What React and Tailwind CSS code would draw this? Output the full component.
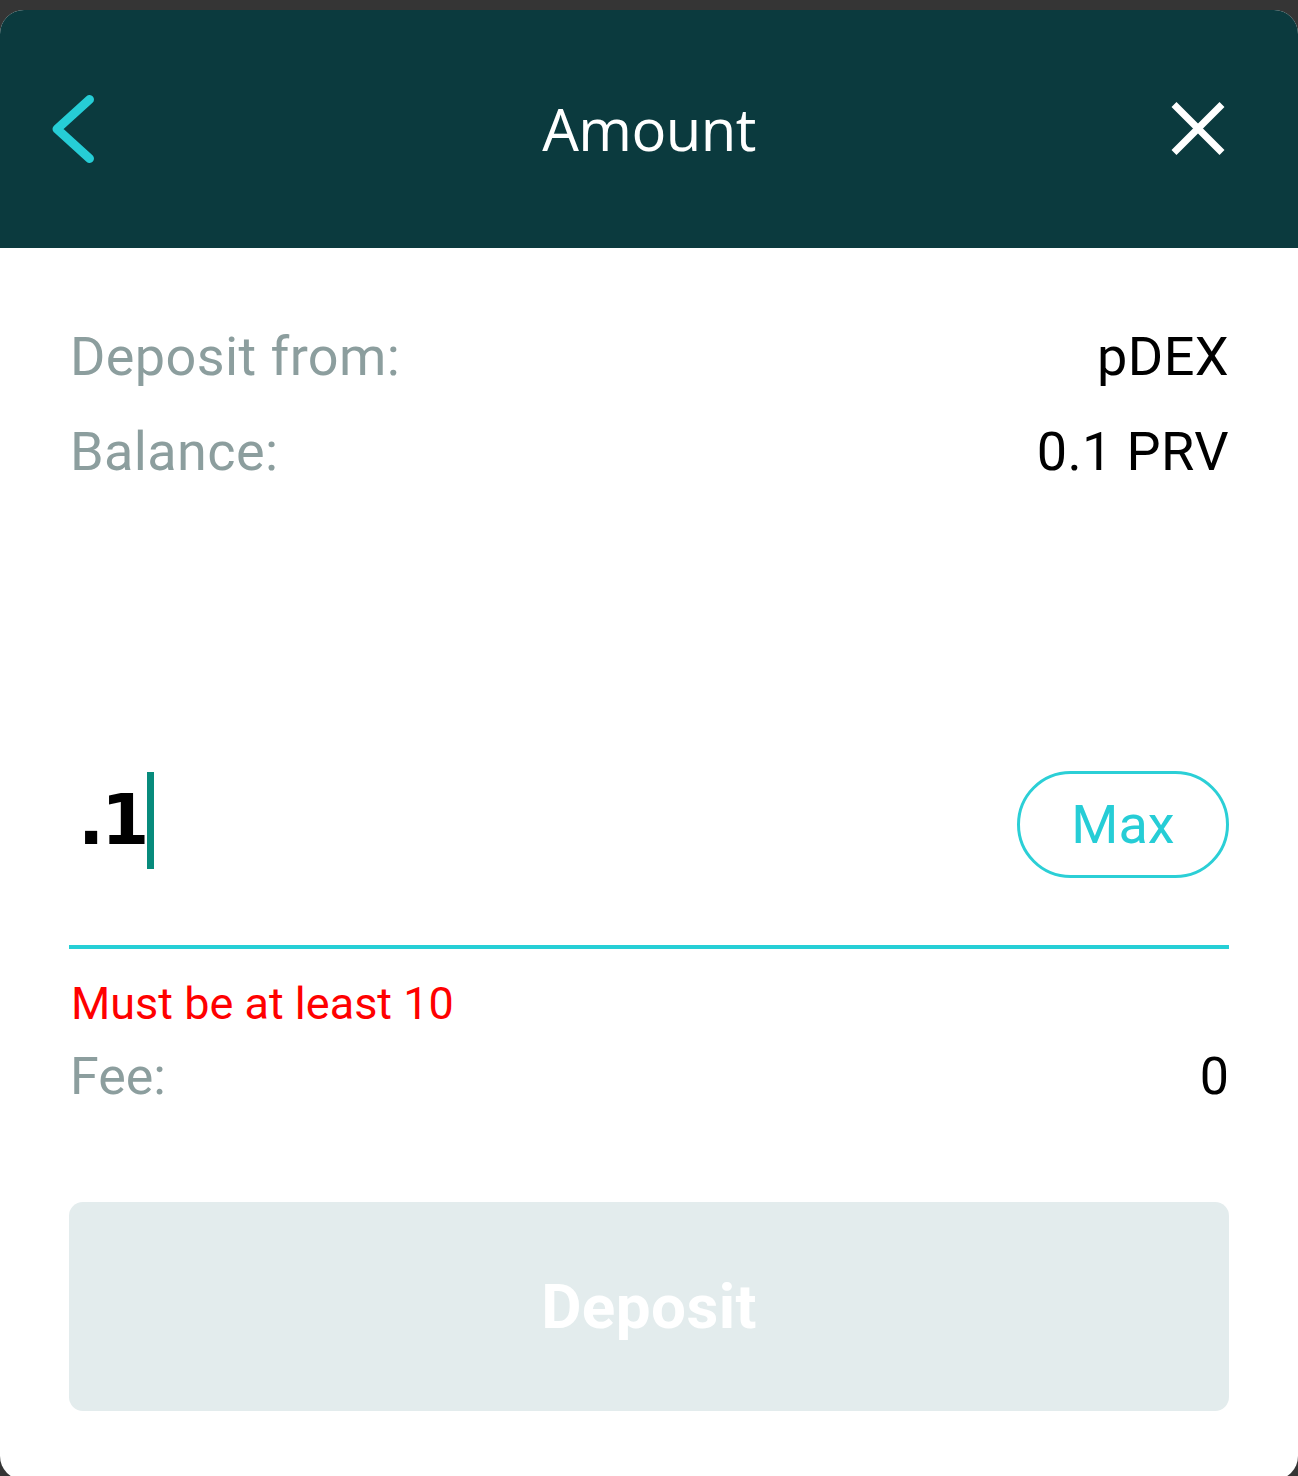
import React from "react";

const rows = [
  { label: "Deposit from:", value: "pDEX" },
  { label: "Balance:", value: "0.1 PRV" },
];

function BackIcon() {
  return (
    <svg width="48" height="76" viewBox="0 0 48 76" fill="none">
      <path
        d="M41.5 8.5 L9 38 L41.5 67.5"
        stroke="#26cdd6"
        strokeWidth="9"
        strokeLinecap="round"
        strokeLinejoin="round"
      />
    </svg>
  );
}

function CloseIcon() {
  return (
    <svg width="64" height="64" viewBox="0 0 64 64" fill="none">
      <path d="M8 7.5 L56 55.5 M56 7.5 L8 55.5" stroke="#ffffff" strokeWidth="7" />
    </svg>
  );
}

export default function App() {
  return (
    <div className="h-[1476px] overflow-hidden bg-[#353535] pt-[10px] font-['Roboto',sans-serif]">
      <div className="flex h-[1470px] flex-col overflow-hidden rounded-[24px] bg-white">
        <header className="grid h-[238px] grid-cols-[1fr_auto_1fr] items-center bg-[#0b3a3e] px-[48px]">
          <div className="flex">
            <BackIcon />
          </div>
          <h1 className="font-['Open_Sans',sans-serif] text-[58px] leading-none tracking-[-0.6px] text-white">
            Amount
          </h1>
          <div className="flex justify-end pr-[20px]">
            <CloseIcon />
          </div>
        </header>

        <main className="flex flex-col px-[69px] pt-[77px]">
          <div className="flex flex-col gap-[31px]">
            {rows.map((row) => (
              <div
                key={row.label}
                className="flex justify-between pl-[1px] text-[54px] leading-[64px] tracking-[0.4px]"
              >
                <span className="text-[#8c9e9e]">{row.label}</span>
                <span className="text-black">{row.value}</span>
              </div>
            ))}
          </div>

          <div className="mt-[287px] flex h-[107px] items-center justify-between">
            <div className="flex h-full items-center pb-[8px] pl-[9px]">
              <span className="font-['DejaVu_Sans',sans-serif] text-[69px] font-bold leading-none tracking-[-3px] text-black">
                .1
              </span>
              <span className="ml-[1px] h-[97px] w-[7px] bg-[#078b7c]" />
            </div>
            <button
              type="button"
              className="flex h-[107px] w-[212px] items-center justify-center rounded-full border-[3px] border-[#2bcfd6] text-[54px] leading-none text-[#26cdd6]"
            >
              Max
            </button>
          </div>

          <div className="mt-[67px] h-[4px] bg-[#26cfd6]" />

          <p className="mt-[28px] pl-[2px] text-[45px] leading-[54px] text-[#ff0000]">
            Must be at least 10
          </p>

          <div className="mt-[14px] flex justify-between pl-[1px] text-[52px] leading-[64px]">
            <span className="text-[#8c9e9e]">Fee:</span>
            <span className="text-black">0</span>
          </div>

          <button
            type="button"
            className="mt-[93px] flex h-[209px] items-center justify-center rounded-[14px] bg-[#e3eced] text-[62px] font-bold leading-none tracking-[0.4px] text-white"
          >
            Deposit
          </button>
        </main>
      </div>
    </div>
  );
}
